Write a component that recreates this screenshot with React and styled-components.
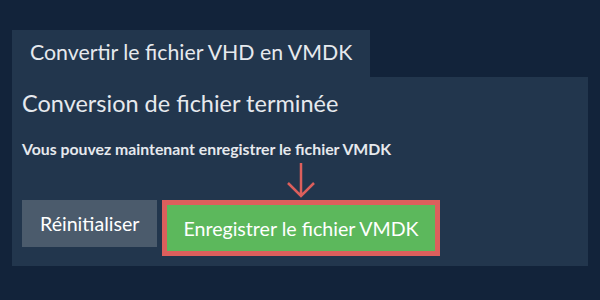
import React from "react";
import styled, { createGlobalStyle } from "styled-components";

const GlobalStyle = createGlobalStyle`
  html, body {
    margin: 0;
    padding: 0;
    background: #12233a;
    font-family: Lato, "Open Sans", sans-serif;
  }
`;

const Page = styled.div`
  width: 600px;
  height: 300px;
  box-sizing: border-box;
  padding: 30px 12px 0;
  background: #12233a;
`;

const Tab = styled.div`
  display: inline-block;
  height: 47px;
  line-height: 44px;
  padding: 0 18px;
  background: #22364d;
  color: #e6e9ed;
  font-size: 21.3px;
`;

const Panel = styled.div`
  background: #22364d;
  padding: 10px;
  color: #e6e9ed;
`;

const Heading = styled.h2`
  margin: 0;
  font-size: 23.5px;
  font-weight: 400;
  line-height: 32px;
`;

const Note = styled.p`
  margin: 20px 0 0;
  font-size: 15.8px;
  font-weight: 700;
  line-height: 20px;
`;

const Actions = styled.div`
  display: flex;
  align-items: flex-start;
  gap: 5px;
  margin-top: 41px;
`;

const Button = styled.button`
  border: none;
  font-family: inherit;
  font-size: 19.6px;
  color: #fff;
  cursor: pointer;
  height: ${(p) => (p.$primary ? "46px" : "47px")};
  padding: 0 ${(p) => (p.$primary ? "16px" : "18px")};
  background: ${(p) => (p.$primary ? "#5cb85c" : "#4b5b6c")};
`;

const Highlight = styled.div`
  position: relative;
  border: 5px solid #dc5f5c;
  display: flex;
`;

const Arrow = styled.svg`
  position: absolute;
  left: 50%;
  top: -43px;
  transform: translateX(-50%);
`;

export default function App() {
  return (
    <Page>
      <GlobalStyle />
      <Tab>Convertir le fichier VHD en VMDK</Tab>
      <Panel>
        <Heading>Conversion de fichier terminée</Heading>
        <Note>Vous pouvez maintenant enregistrer le fichier VMDK</Note>
        <Actions>
          <Button type="button">Réinitialiser</Button>
          <Highlight>
            <Arrow width="30" height="36" viewBox="0 0 30 36">
              <path
                d="M15 1 V34 M2 21 L15 34 L28 21"
                fill="none"
                stroke="#dc5f5c"
                strokeWidth="2.5"
              />
            </Arrow>
            <Button type="button" $primary>
              Enregistrer le fichier VMDK
            </Button>
          </Highlight>
        </Actions>
      </Panel>
    </Page>
  );
}
